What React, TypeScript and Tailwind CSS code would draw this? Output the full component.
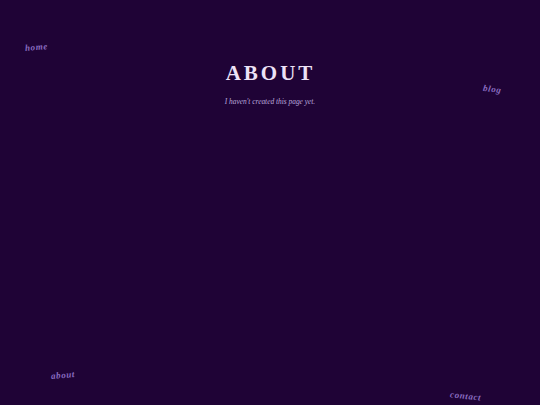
export default function App() {
  const link = "absolute font-bold italic text-[9px] tracking-[0.6px] text-[#8a6cc0]";
  return (
    <div className="relative w-[540px] h-[405px] overflow-hidden bg-[#1f0336]" style={{ fontFamily: '"Liberation Serif", "DejaVu Serif", serif' }}>
      <a className={`${link} left-[25px] top-[41px] -rotate-[5deg]`}>home</a>
      <a className={`${link} left-[483px] top-[83px] rotate-[8deg]`}>blog</a>
      <a className={`${link} left-[51px] top-[369px] -rotate-[5deg]`}>about</a>
      <a className={`${link} left-[450px] top-[390px] rotate-[6deg]`}>contact</a>
      <div className="flex flex-col items-center pt-[61px]">
        <h1 className="text-[21px] leading-[24px] font-bold tracking-[3px] pl-[1px] text-[#ede2f7]">ABOUT</h1>
        <p className="mt-[11px] text-[7.4px] italic text-[#bba8dc]">I haven't created this page yet.</p>
      </div>
    </div>
  );
}
